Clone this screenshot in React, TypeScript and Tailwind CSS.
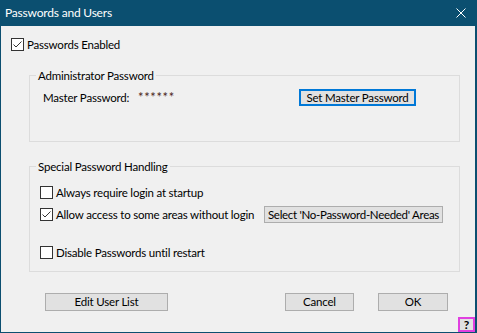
import React from "react";

const font = { fontFamily: "Lato, 'Liberation Sans', sans-serif" };

function CheckBox({ checked }: { checked?: boolean }) {
  return (
    <span className="w-[13px] h-[13px] shrink-0 border border-[#333333] bg-white flex items-center justify-center">
      {checked && (
        <svg width="11" height="11" viewBox="0 0 11 11">
          <path d="M1.5 5.5 L4 8 L9.5 2.5" fill="none" stroke="#333333" strokeWidth="1" />
        </svg>
      )}
    </span>
  );
}

function Button({ label, className }: { label: string; className: string }) {
  return (
    <button
      className={`flex items-center justify-center whitespace-nowrap bg-[#e1e1e1] border border-[#adadad] text-[11.5px] leading-none text-black ${className}`}
    >
      {label}
    </button>
  );
}

export default function App() {
  return (
    <div
      className="w-[477px] h-[333px] flex flex-col bg-[#f0f0f0] border-l border-r-2 border-b border-[#0b4f70] text-[11.5px] tracking-[-0.2px] whitespace-nowrap text-black select-none"
      style={font}
    >
      {/* Title bar */}
      <div className="h-[26px] shrink-0 bg-[#0b4f70] flex items-center justify-between pl-[4px] pr-[9px] text-white">
        <span className="text-[12px]">Passwords and Users</span>
        <svg width="10" height="10" viewBox="0 0 10 10">
          <path d="M0.5 0.5 L9.5 9.5 M9.5 0.5 L0.5 9.5" stroke="#ffffff" strokeWidth="1" />
        </svg>
      </div>

      {/* Client */}
      <div className="flex flex-col flex-1">
        <label className="mt-[12px] ml-[10px] h-[13px] flex items-center gap-[3px]">
          <CheckBox checked />
          <span>Passwords Enabled</span>
        </label>

        <fieldset className="mt-[17px] ml-[28px] w-[431px] h-[74px] border border-[#dcdcdc]">
          <legend className="ml-[6px] px-[2px] leading-[15px]">Administrator Password</legend>
          <div className="mt-[6px] pl-[13px] h-[17px] flex items-center">
            <span className="w-[95px]">Master Password:</span>
            <span className="w-[161px] text-[13px] tracking-[0.6px] text-[#4a2620]">******</span>
            <button className="w-[117px] h-[17px] flex items-center justify-center bg-[#e1e1e1] border-2 border-[#0078d7] text-[11.5px] leading-none">
              Set Master Password
            </button>
          </div>
        </fieldset>

        <fieldset className="mt-[17px] ml-[28px] w-[431px] h-[113px] border border-[#dcdcdc]">
          <legend className="ml-[6px] px-[2px] leading-[15px]">Special Password Handling</legend>
          <div className="pl-[10px] flex flex-col">
            <label className="mt-[12px] h-[13px] flex items-center gap-[3px]">
              <CheckBox />
              <span>Always require login at startup</span>
            </label>
            <div className="mt-[7px] h-[17px] flex items-center">
              <label className="flex items-center gap-[3px]">
                <CheckBox checked />
                <span className="w-[208px]">Allow access to some areas without login</span>
              </label>
              <Button label="Select 'No-Password-Needed' Areas" className="w-[179px] h-[17px] tracking-[-0.3px]" />
            </div>
            <label className="mt-[23px] h-[13px] flex items-center gap-[3px]">
              <CheckBox />
              <span>Disable Passwords until restart</span>
            </label>
          </div>
        </fieldset>

        <div className="mt-[21px] ml-[44px] flex items-center">
          <Button label="Edit User List" className="w-[123px] h-[18px]" />
          <Button label="Cancel" className="ml-[117px] w-[69px] h-[18px]" />
          <Button label="OK" className="ml-[24px] w-[70px] h-[18px]" />
        </div>

        <div className="mt-[6px] flex justify-end">
          <button className="w-[17px] h-[15px] flex items-center justify-center bg-[#e1e1e1] border-2 border-[#e040e0] text-[12px] font-bold leading-none">
            ?
          </button>
        </div>
      </div>
    </div>
  );
}
